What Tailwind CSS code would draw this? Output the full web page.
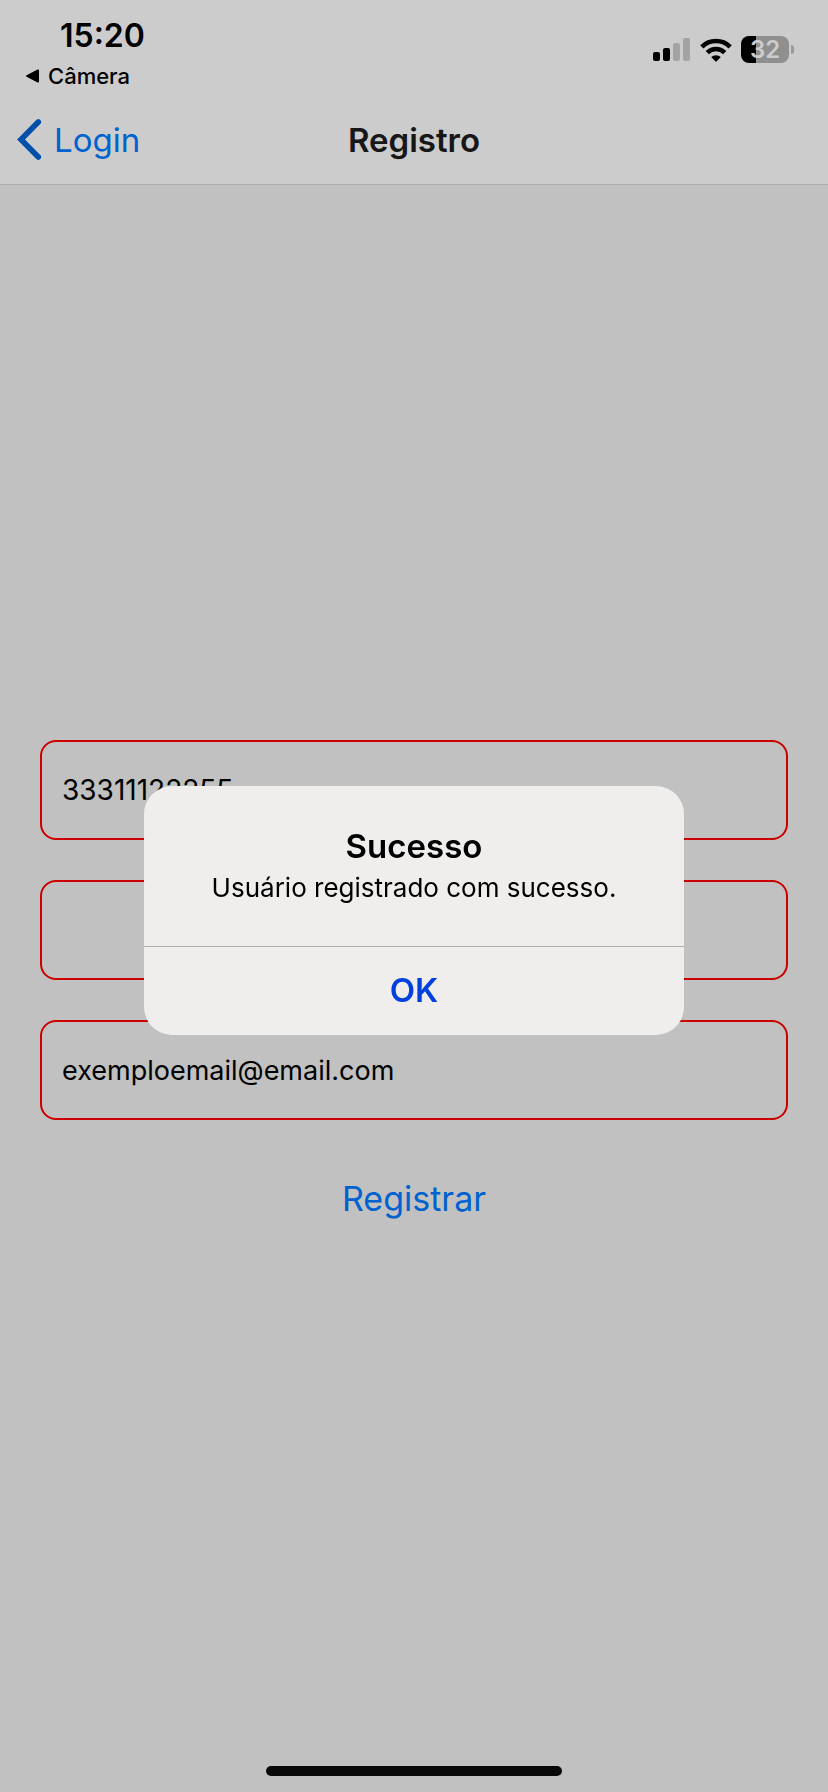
<!DOCTYPE html>
<html lang="pt-BR">
<head>
<meta charset="utf-8">
<meta name="viewport" content="width=device-width, initial-scale=1">
<title>Registro</title>
<script src="https://cdn.jsdelivr.net/npm/@tailwindcss/browser@4"></script>
</head>
<body class="flex min-h-screen flex-col bg-[#c1c1c1] font-['Inter','Liberation_Sans',sans-serif] text-black">
  <header class="border-b border-[#adadad] bg-[#cccccc]">
    <div class="flex h-24 items-start justify-between pl-6 pr-[34px]">
      <div class="flex flex-col pt-4">
        <time class="pl-9 text-[32px] leading-10 font-semibold">15:20</time>
        <a href="#" class="flex items-center gap-2 text-[22px] leading-10 font-medium">
          <svg class="h-4 w-4" viewBox="0 0 16 16" aria-hidden="true"><path d="M2.6 7.2 13.6 1.6Q15 1 15 2.4V13.6Q15 15 13.6 14.4L2.6 8.8Q1 8 2.6 7.2Z"/></svg>
          Câmera
        </a>
      </div>
      <div class="flex items-center gap-[9px] pt-9">
        <svg class="h-6 w-[38px]" viewBox="0 0 38 24" aria-label="Sinal">
          <rect x="0" y="14" width="7" height="9" rx="2"/>
          <rect x="10" y="10" width="7" height="13" rx="2"/>
          <g fill="#a3a3a3"><rect x="20" y="5" width="7" height="18" rx="2"/><rect x="30" y="0" width="7" height="23" rx="2"/></g>
        </svg>
        <svg class="h-6 w-8" viewBox="0 0 32 24" aria-label="Wi-Fi">
          <g fill="none" stroke="#000" stroke-width="4.6"><path d="M1.8 8.8a20.3 20.3 0 0 1 28.4 0"/><path d="M7.3 14.6a12.4 12.4 0 0 1 17.4 0"/></g>
          <path d="M11.2 19.1a6.9 6.9 0 0 1 9.6 0L16.7 23.3q-.7.7-1.4 0Z"/>
        </svg>
        <div class="flex items-center gap-[2px]">
          <div class="flex h-[27px] w-12 items-center justify-center rounded-lg bg-linear-to-r from-black from-[31%] to-[#8f8f8f] to-[31%] text-[24px] leading-none font-semibold text-[#cccccc]">32</div>
          <div class="h-[9px] w-[3px] rounded-r-full bg-[#999999]"></div>
        </div>
      </div>
    </div>
    <nav class="grid h-22 grid-cols-3 items-start px-4">
      <a href="#" class="flex items-start gap-3 pt-[22px] text-[33px] leading-[44px] text-[#0062cf]">
        <svg class="h-[42px] w-[26px]" viewBox="0 0 26 42" fill="none" stroke="#0050aa" stroke-width="5.6" stroke-linecap="round" stroke-linejoin="miter" aria-hidden="true"><path d="M22.3 4 5 21.5 22.3 39"/></svg>
        Login
      </a>
      <h1 class="pt-[22px] text-center text-[33px] leading-[44px] font-semibold text-[#171718]">Registro</h1>
    </nav>
  </header>

  <main class="flex grow flex-col justify-center">
    <form class="flex flex-col gap-10 px-10">
      <input type="text" aria-label="CPF" value="33311122255" class="h-[100px] w-full rounded-2xl border-2 border-[#cd0000] px-5 text-[28px]">
      <input type="text" aria-label="Nome" class="h-[100px] w-full rounded-2xl border-2 border-[#cd0000] px-5 text-[28px]">
      <input type="email" aria-label="E-mail" value="exemploemail@email.com" class="h-[100px] w-full rounded-2xl border-2 border-[#cd0000] px-5 text-[27px]">
      <button type="button" class="h-[77px] self-center px-4 text-[34px] text-[#0062cf]">Registrar</button>
    </form>
  </main>

  <div class="fixed inset-0 flex items-center justify-center pt-[29px]">
    <div role="alertdialog" aria-labelledby="alert-title" aria-describedby="alert-text" class="w-[540px] overflow-hidden rounded-[28px] bg-[#efeeec] text-center">
      <div class="px-8 pt-[38px] pb-[38px]">
        <h2 id="alert-title" class="text-[33px] leading-[44px] font-semibold">Sucesso</h2>
        <p id="alert-text" class="text-[26px] leading-10">Usuário registrado com sucesso.</p>
      </div>
      <button type="button" class="h-[89px] w-full border-t border-[#adadac] text-[33px] font-semibold text-[#0040df]">OK</button>
    </div>
  </div>

  <div class="fixed inset-x-0 bottom-4 flex justify-center"><div class="h-[10px] w-74 rounded-full bg-[#090909]"></div></div>
</body>
</html>
